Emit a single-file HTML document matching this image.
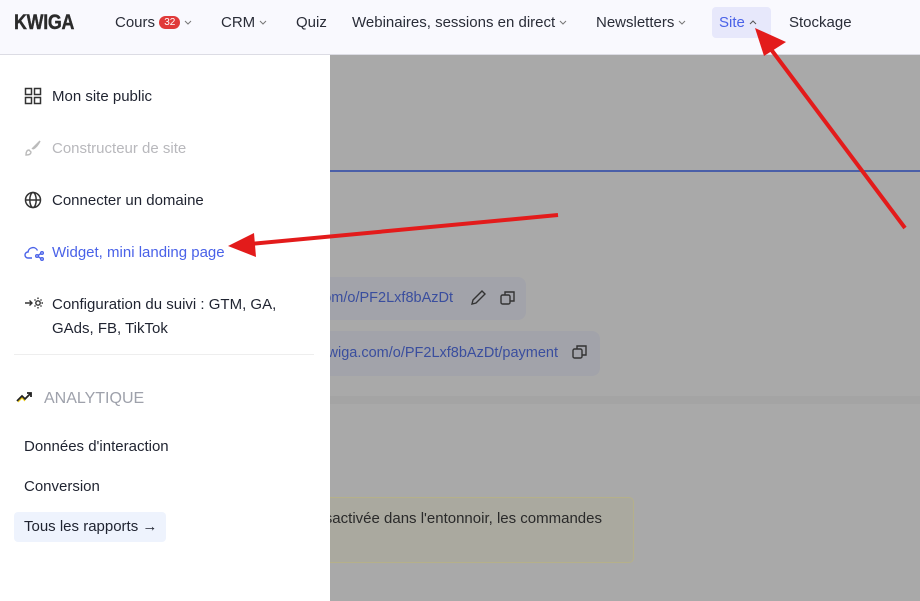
<!DOCTYPE html>
<html><head><meta charset="utf-8"><style>
*{margin:0;padding:0;box-sizing:border-box}
body{width:920px;height:601px;overflow:hidden;background:#a9a9a9;font-family:"Liberation Sans",sans-serif;position:relative;color:#1f2330}
.hdr{position:absolute;left:0;top:0;width:920px;height:55px;background:#f9f9fe;border-bottom:1px solid #dcdce4;z-index:3}
.hdr .n{position:absolute;top:14px;font-size:15px;color:#2a2d38;white-space:nowrap}
.logo{position:absolute;left:14px;top:11px;font-size:21px;font-weight:bold;letter-spacing:-0.3px;color:#2b2b2b;transform:scaleX(0.85);transform-origin:left;-webkit-text-stroke:0.4px #2b2b2b}
.chev{display:inline-block;vertical-align:2px;margin-left:4px}
.badge{display:inline-block;background:#e03a3a;color:#fff;font-size:10px;line-height:13px;border-radius:7px;padding:0 5px;vertical-align:2px}
.side{position:absolute;left:0;top:55px;width:330px;height:546px;background:#fff;z-index:2}
.it{position:absolute;left:52px;font-size:15px;color:#1f2330}
.ic{position:absolute;left:24px}
.g{position:absolute}
</style></head><body>
<div class="hdr">
<div class="logo">KWIGA</div>
<span class="n" style="left:115px">Cours <span class="badge">32</span><svg class="chev" width="8" height="5" viewBox="0 0 8 5"><path d="M1 1l3 3 3-3" fill="none" stroke="#777" stroke-width="1"/></svg></span>
<span class="n" style="left:221px">CRM<svg class="chev" width="8" height="5" viewBox="0 0 8 5"><path d="M1 1l3 3 3-3" fill="none" stroke="#777" stroke-width="1"/></svg></span>
<span class="n" style="left:296px">Quiz</span>
<span class="n" style="left:352px">Webinaires, sessions en direct<svg class="chev" width="8" height="5" viewBox="0 0 8 5"><path d="M1 1l3 3 3-3" fill="none" stroke="#777" stroke-width="1"/></svg></span>
<span class="n" style="left:596px">Newsletters<svg class="chev" width="8" height="5" viewBox="0 0 8 5"><path d="M1 1l3 3 3-3" fill="none" stroke="#777" stroke-width="1"/></svg></span>
<div style="position:absolute;left:712px;top:7px;width:59px;height:31px;background:#e7e8fb;border-radius:4px"></div>
<span class="n" style="left:719px;color:#4a62e8">Site<svg class="chev" width="8" height="5" viewBox="0 0 8 5"><path d="M1 4l3-3 3 3" fill="none" stroke="#555" stroke-width="1"/></svg></span>
<span class="n" style="left:789px">Stockage</span>
</div>
<div class="side">
<svg class="ic" style="top:32px" width="18" height="18" viewBox="0 0 18 18" fill="none" stroke="#333" stroke-width="1.5"><rect x="1.5" y="1.5" width="6" height="6"/><rect x="10.5" y="1.5" width="6" height="6"/><rect x="1.5" y="10.5" width="6" height="6"/><rect x="10.5" y="10.5" width="6" height="6"/></svg>
<div class="it" style="top:33px">Mon site public</div>
<svg class="ic" style="top:84px" width="18" height="18" viewBox="0 0 18 18" fill="none" stroke="#bbb" stroke-width="1.4"><path d="M16 2L8 10M16 2c-2 4-5 7-7 8M5 11c-2 0-3 2-3 5 3 0 5-1 5-3z"/></svg>
<div class="it" style="top:85px;color:#b8b8bc">Constructeur de site</div>
<svg class="ic" style="top:136px" width="18" height="18" viewBox="0 0 18 18" fill="none" stroke="#333" stroke-width="1.5"><circle cx="9" cy="9" r="7.5"/><ellipse cx="9" cy="9" rx="3.2" ry="7.5"/><path d="M1.5 9h15"/></svg>
<div class="it" style="top:137px">Connecter un domaine</div>
<svg class="ic" style="top:188px" width="20" height="18" viewBox="0 0 20 18" fill="none" stroke="#4a62e8" stroke-width="1.4"><path d="M8 15H4a3 3 0 0 1 0-6 5 5 0 0 1 9.5-1.5"/><circle cx="18" cy="10" r="1.3"/><circle cx="18" cy="16" r="1.3"/><circle cx="13" cy="13" r="1.3"/><path d="M14 12.5l3-2M14 13.5l3 2"/></svg>
<div class="it" style="top:189px;color:#4a62e8">Widget, mini landing page</div>
<svg class="ic" style="top:240px" width="20" height="18" viewBox="0 0 20 18" fill="none" stroke="#333" stroke-width="1.4"><path d="M1 8h7M5.5 5.5L8 8l-2.5 2.5"/><circle cx="14" cy="8" r="2.2"/><path d="M14 2.5v1.5M14 12v1.5M19 8h-1.5M10.5 4.5l1 1M17.5 4.5l-1 1M17.5 11.5l-1-1M10.5 11.5l1-1"/></svg>
<div class="it" style="top:241px;line-height:24px;margin-top:-3px">Configuration du suivi : GTM, GA,<br>GAds, FB, TikTok</div>
<div style="position:absolute;left:14px;top:299px;width:300px;height:1px;background:#eee"></div>
<svg class="ic" style="left:16px;top:336px" width="18" height="12" viewBox="0 0 18 12" fill="none" stroke-width="1.8"><path d="M1 10l5-5 3 3 6-6" stroke="#222"/><path d="M11 2h4v4" stroke="#222"/><path d="M2 11l4-4 3 3" stroke="#e8c400" stroke-width="1"/></svg>
<div class="it" style="left:44px;top:335px;font-size:16px;color:#9ea1ab">ANALYTIQUE</div>
<div class="it" style="left:24px;top:383px">Données d'interaction</div>
<div class="it" style="left:24px;top:423px">Conversion</div>
<div style="position:absolute;left:14px;top:457px;width:152px;height:30px;background:#eef3fd;border-radius:4px"></div>
<div class="it" style="left:24px;top:463px">Tous les rapports →</div>
</div>
<div class="g" style="left:330px;top:170px;width:590px;height:2px;background:#4a5fa8"></div>
<div class="g" style="left:300px;top:277px;width:226px;height:43px;background:#a2a3aa;border-radius:8px"></div>
<div class="g" style="left:300px;top:331px;width:300px;height:45px;background:#a2a3aa;border-radius:8px"></div>
<div class="g" style="right:467px;top:290px;font-size:14.5px;color:#3a4e9e;white-space:nowrap">.com/o/PF2Lxf8bAzDt</div>
<div class="g" style="right:362px;top:345px;font-size:14.5px;color:#3a4e9e;white-space:nowrap">wiga.com/o/PF2Lxf8bAzDt/payment</div>
<svg class="g" style="left:469px;top:289px" width="50" height="18" viewBox="0 0 50 18" fill="none" stroke="#333" stroke-width="1.4"><path d="M3 15l1-4 9-9 3 3-9 9z"/><rect x="32" y="6" width="9" height="9" rx="1.5"/><path d="M36 6V3h9v9h-4"/></svg>
<svg class="g" style="left:571px;top:343px" width="20" height="18" viewBox="0 0 20 18" fill="none" stroke="#333" stroke-width="1.4"><rect x="2" y="6" width="9" height="9" rx="1.5"/><path d="M6 6V3h9v9h-4"/></svg>
<div class="g" style="left:330px;top:396px;width:590px;height:8px;background:#a4a4a4"></div>
<div class="g" style="left:300px;top:497px;width:334px;height:66px;background:#aaa99f;border:1px solid #b5b08a;border-radius:5px"></div>
<div class="g" style="right:318px;top:510px;font-size:15px;color:#2a2a2a;white-space:nowrap">désactivée dans l'entonnoir, les commandes</div>
<svg class="g" style="left:0;top:0;z-index:5" width="920" height="601"><g stroke="#e31b1b" stroke-width="4" fill="#e31b1b"><line x1="905" y1="228" x2="770" y2="48"/><polygon points="755,28 786,42 764,56" stroke="none"/><line x1="558" y1="215" x2="250" y2="244"/><polygon points="228,246 254,233 256,257" stroke="none"/></g></svg>
</body></html>
